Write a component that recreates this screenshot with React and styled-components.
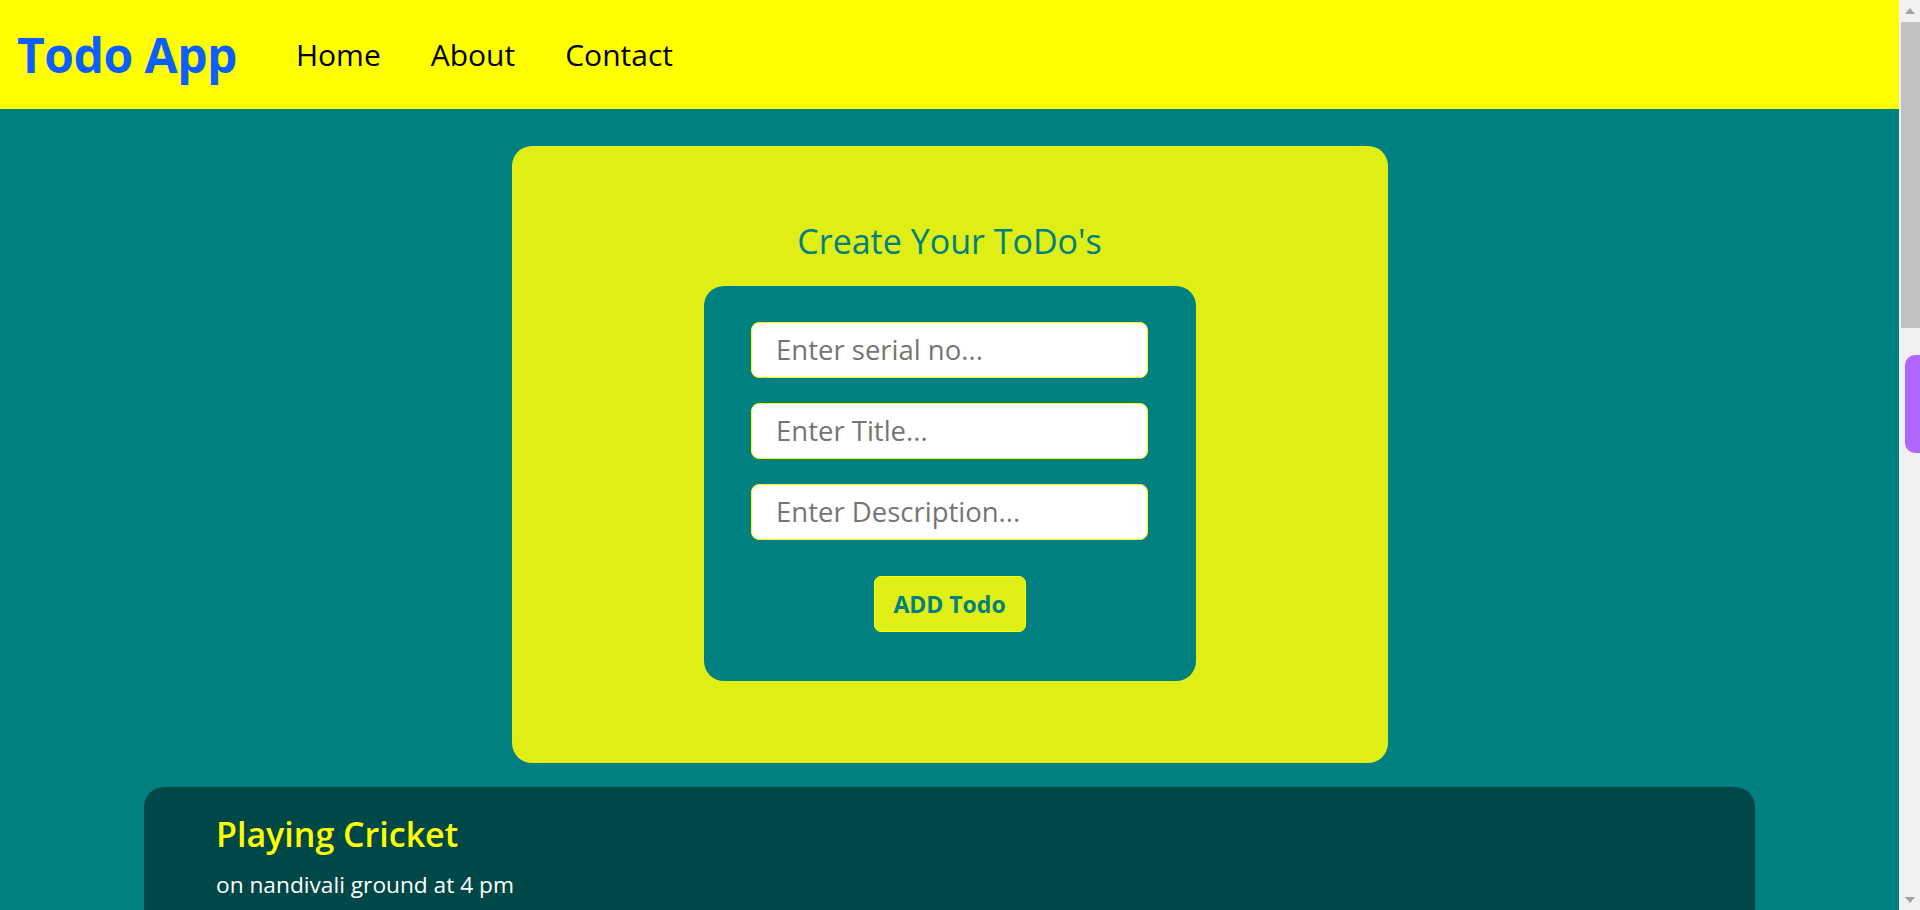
import React from 'react';
import styled, { createGlobalStyle } from 'styled-components';

const GlobalStyle = createGlobalStyle`
    * {
        box-sizing:border-box;
    }
    html {
        scrollbar-width:none;
    }
    body {
        margin:0;
        padding-right:21px;
        font-family:"Open Sans", "Noto Sans", sans-serif;
        background-color:#008080;
    }
`;

const Header = styled.header`
    height:109px;
    background-color:#ffff00;
    display:flex;
    align-items:center;
    padding-left:17px;
    .logo {
        font-size:48px;
        font-weight:700;
        color:#0d5eff;
        letter-spacing:-0.5px;
        margin-right:59px;
    }
`;

const Nav = styled.nav`
    display:flex;
    align-items:center;
    gap:50px;
`;

const NavLink = styled.a`
    font-size:30px;
    color:#000;
    text-decoration:none;
    cursor:pointer;
`;

const Main = styled.main`
    padding:37px 0 24px;
    display:flex;
    flex-direction:column;
    align-items:center;
`;

const Card = styled.section`
    width:876px;
    background-color:#dfee15;
    border-radius:20px;
    padding:75px 0 82px;
    display:flex;
    flex-direction:column;
    align-items:center;
`;

const Title = styled.h2`
    margin:0 0 24px;
    font-size:34px;
    font-weight:400;
    line-height:1.2;
    color:#008080;
`;

const Form = styled.form`
    width:492px;
    background-color:#008080;
    border-radius:20px;
    padding:36px 0 49px;
    display:flex;
    flex-direction:column;
    align-items:center;
    gap:25px;
`;

const Input = styled.input`
    width:397px;
    height:56px;
    border:1px solid #ffff00;
    border-radius:8px;
    background-color:#fff;
    padding:0 24px;
    font-family:inherit;
    font-size:27.5px;
    color:#333;
    outline:none;
    &::placeholder {
        color:#757575;
    }
`;

const AddButton = styled.button`
    margin-top:11px;
    width:152px;
    height:56px;
    background-color:#dfee15;
    border:1px solid #ffff00;
    border-radius:7px;
    font-family:inherit;
    font-size:23px;
    font-weight:700;
    color:#008080;
    cursor:pointer;
`;

const TodoList = styled.section`
    margin-top:24px;
    width:1611px;
    min-height:400px;
    background-color:#004848;
    border-radius:20px;
    padding:27px 72px;
`;

const TodoItem = styled.div`
    h3 {
        margin:0;
        font-size:34px;
        font-weight:600;
        line-height:1.2;
        color:#ffff00;
    }
    p {
        margin:16px 0 0;
        font-size:22.7px;
        line-height:1.2;
        color:#fff;
    }
`;

const ScrollBar = styled.div`
    position:fixed;
    top:0;
    right:0;
    width:21px;
    height:100vh;
    background-color:#f1f1f1;
    display:flex;
    flex-direction:column;
    z-index:5;
`;

const ScrollButton = styled.div`
    height:21px;
    display:flex;
    align-items:center;
    justify-content:center;
    &::after {
        content:"";
        border-left:5.5px solid transparent;
        border-right:5.5px solid transparent;
        ${({ $down }) => $down
            ? 'border-top:6px solid #a3a3a3;'
            : 'border-bottom:6px solid #a3a3a3;'}
    }
`;

const ScrollThumb = styled.div`
    margin:1px 0 0 2px;
    height:306px;
    background-color:#c1c1c1;
`;

const ScrollTrack = styled.div`
    flex:1;
`;

const SideTab = styled.div`
    position:fixed;
    top:355px;
    right:0;
    width:15px;
    height:98px;
    background-color:#b266ff;
    border-radius:10px 0 0 10px;
    z-index:10;
`;

const todos = [
    { sno: 1, title: 'Playing Cricket', desc: 'on nandivali ground at 4 pm' },
];

const App = () => {
    return(
        <>
            <GlobalStyle />
            <Header>
                <div className="logo">Todo App</div>
                <Nav>
                    <NavLink>Home</NavLink>
                    <NavLink>About</NavLink>
                    <NavLink>Contact</NavLink>
                </Nav>
            </Header>
            <Main>
                <Card>
                    <Title>Create Your ToDo's</Title>
                    <Form onSubmit={(e) => e.preventDefault()}>
                        <Input type="text" placeholder="Enter serial no..." />
                        <Input type="text" placeholder="Enter Title..." />
                        <Input type="text" placeholder="Enter Description..." />
                        <AddButton type="submit">ADD Todo</AddButton>
                    </Form>
                </Card>
                <TodoList>
                    {todos.map((todo) => (
                        <TodoItem key={todo.sno}>
                            <h3>{todo.title}</h3>
                            <p>{todo.desc}</p>
                        </TodoItem>
                    ))}
                </TodoList>
            </Main>
            <ScrollBar>
                <ScrollButton />
                <ScrollThumb />
                <ScrollTrack />
                <ScrollButton $down />
            </ScrollBar>
            <SideTab />
        </>
    );
}

export default App;
